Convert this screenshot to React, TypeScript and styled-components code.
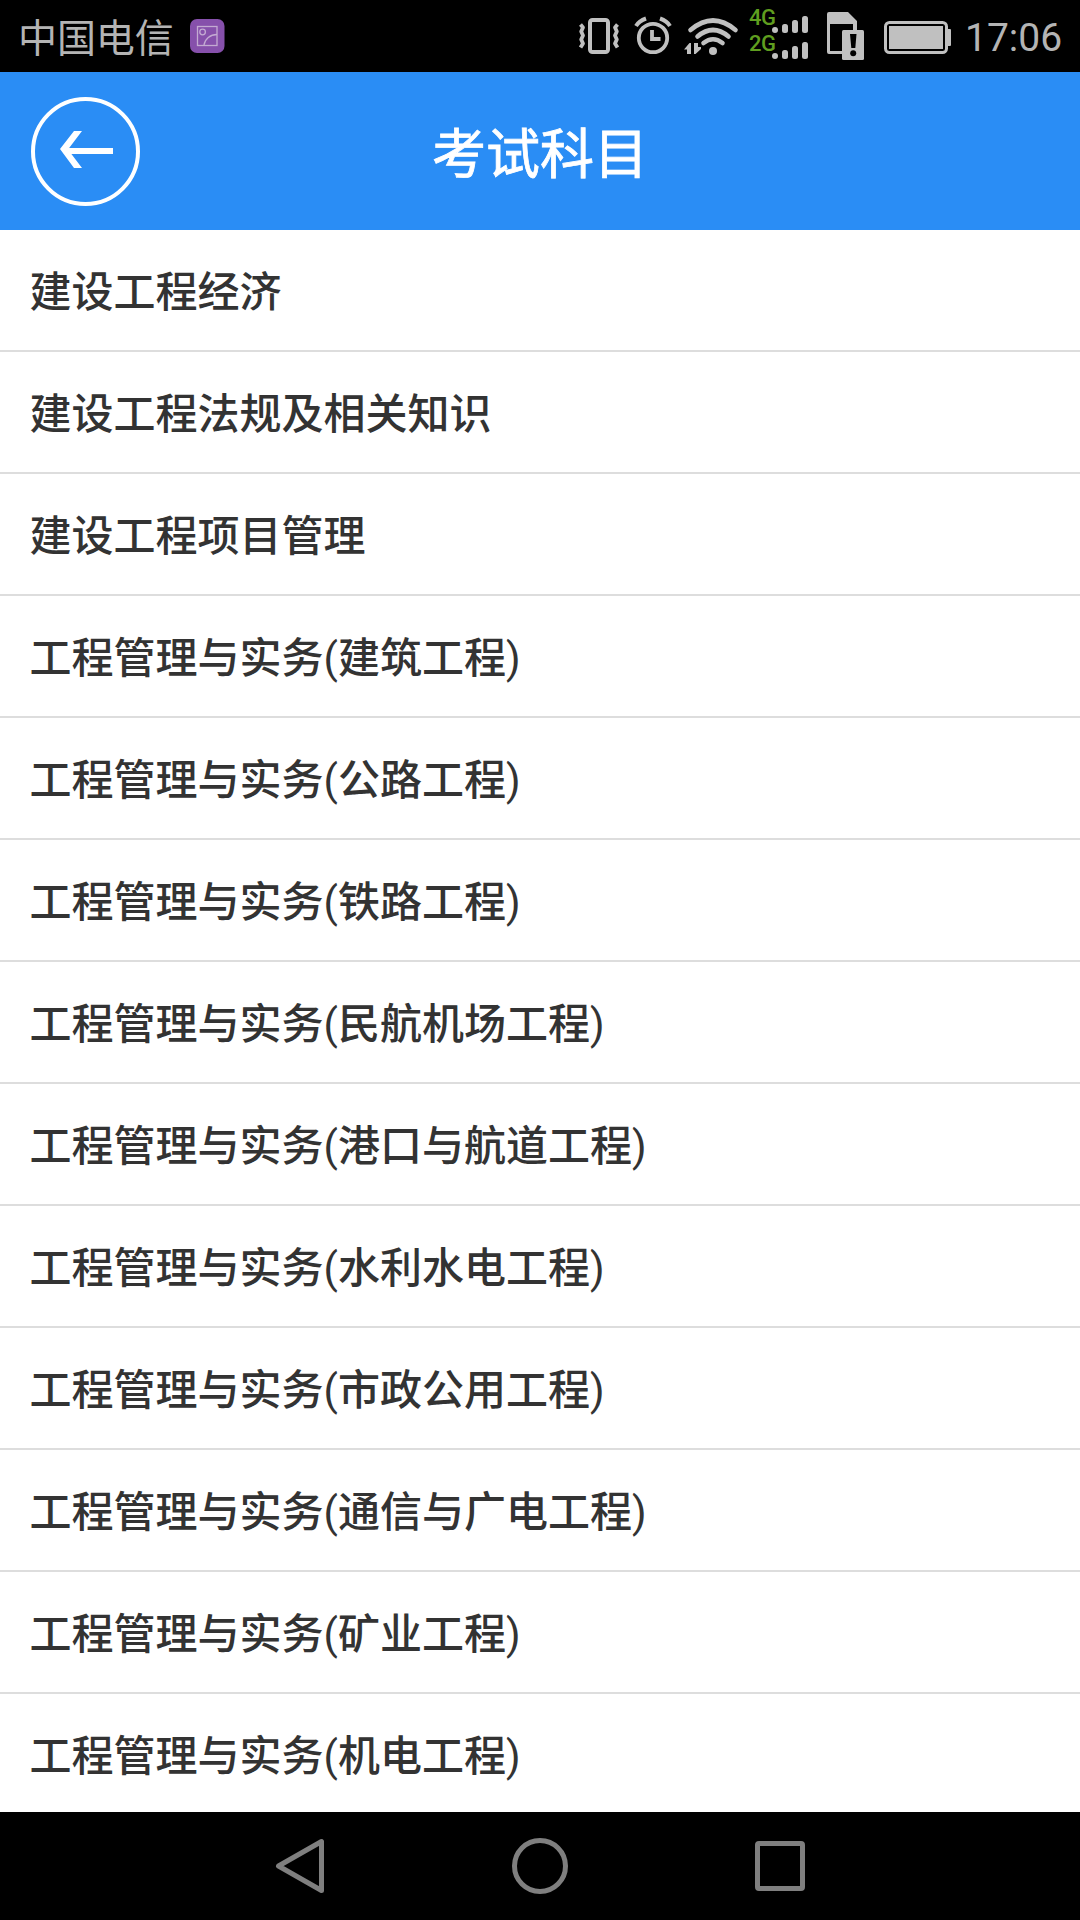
import React from "react";
import styled, { createGlobalStyle } from "styled-components";

const GlobalStyle = createGlobalStyle`
  * { box-sizing: border-box; }
  body { margin: 0; background: #fff; }
`;

const Screen = styled.div`
  display: flex;
  flex-direction: column;
  width: 1080px;
  height: 1920px;
  overflow: hidden;
  background: #fff;
  font-family: Roboto, "Noto Sans CJK SC", sans-serif;
`;

const StatusBar = styled.div`
  display: flex;
  flex: none;
  align-items: flex-start;
  height: 72px;
  padding: 0 17px 0 18px;
  background: #000;
  color: #b4b4b4;
`;

const Carrier = styled.span`
  flex: none;
  width: 157px;
  margin-top: 3px;
  font-size: 39px;
  font-weight: 400;
  line-height: 72px;
  letter-spacing: -0.1px;
  white-space: nowrap;
`;

const Clock = styled.span`
  margin-top: 2px;
  font-size: 39px;
  line-height: 72px;
  white-space: nowrap;
`;

const Glyph = styled.svg<{ $left?: number }>`
  display: block;
  flex: none;
  height: 72px;
  margin-left: ${(p) => p.$left ?? 0}px;
`;

const Networks = styled.div`
  display: flex;
  flex: none;
  flex-direction: column;
  width: 60px;
  margin-left: 10px;
  padding-top: 7px;
`;

const NetworkRow = styled.div`
  display: flex;
  align-items: flex-start;
  height: 26px;
`;

const NetworkType = styled.span`
  width: 23px;
  color: #5f9e1f;
  font-size: 22px;
  font-weight: 500;
  line-height: 22px;
  letter-spacing: -0.6px;
  white-space: nowrap;
`;

const Bars = styled.svg`
  display: block;
  flex: none;
  margin-top: 9px;
`;

const Header = styled.header`
  display: grid;
  grid-template-columns: 140px 1fr 140px;
  flex: none;
  align-items: center;
  height: 158px;
  background: #2a8df5;
`;

const BackButton = styled.button`
  width: 110px;
  height: 110px;
  margin: 0 0 0 30px;
  padding: 0;
  border: 0;
  background: none;
`;

const Title = styled.h1`
  margin: 9px 0 0;
  color: #fff;
  font-size: 54px;
  font-weight: 400;
  line-height: 80px;
  text-align: center;
  -webkit-text-stroke: 0.8px #fff;
`;

const List = styled.ul`
  flex: 1;
  min-height: 0;
  margin: 0;
  padding: 0;
  overflow: hidden;
  list-style: none;
`;

const Row = styled.li`
  display: flex;
  align-items: center;
  height: 122px;
  padding: 0 29.5px 4px;
  border-bottom: 2px solid #ddd;
  color: #333;
  font-size: 42px;
  font-weight: 500;
  white-space: nowrap;
`;

const Paren = styled.span`
  font-weight: 400;
`;

const NavBar = styled.nav`
  display: flex;
  flex: none;
  align-items: center;
  justify-content: center;
  gap: 180px;
  height: 108px;
  background: #000;
`;

const NavIcon = styled.svg`
  display: block;
  width: 60px;
  height: 60px;
  fill: none;
  stroke: #7f7f7f;
  stroke-width: 5;
  stroke-linejoin: round;
`;

const subjects = [
  "建设工程经济",
  "建设工程法规及相关知识",
  "建设工程项目管理",
  "工程管理与实务(建筑工程)",
  "工程管理与实务(公路工程)",
  "工程管理与实务(铁路工程)",
  "工程管理与实务(民航机场工程)",
  "工程管理与实务(港口与航道工程)",
  "工程管理与实务(水利水电工程)",
  "工程管理与实务(市政公用工程)",
  "工程管理与实务(通信与广电工程)",
  "工程管理与实务(矿业工程)",
  "工程管理与实务(机电工程)",
];

const C = "#c0c0c0";

function SignalRow({ type }: { type: string }) {
  return (
    <NetworkRow>
      <NetworkType>{type}</NetworkType>
      <Bars width="37" height="18" viewBox="0 0 37 18" fill={C}>
        <rect x="0" y="11" width="6" height="6" rx="3" />
        <rect x="10" y="8" width="6" height="9" rx="2.5" />
        <rect x="20" y="4" width="6" height="13" rx="2.5" />
        <rect x="30" y="0" width="6" height="17" rx="2.5" />
      </Bars>
    </NetworkRow>
  );
}

function SubjectLabel({ text }: { text: string }) {
  return (
    <span>
      {text.split(/([()])/).map((part, i) =>
        part === "(" || part === ")" ? <Paren key={i}>{part}</Paren> : part
      )}
    </span>
  );
}

export default function App() {
  return (
    <Screen>
      <GlobalStyle />
      <StatusBar>
        <Carrier>中国电信</Carrier>
        <Glyph $left={15} width="35" viewBox="190 0 35 72" fill="none">
          <rect x="190" y="19" width="34.5" height="34" rx="7" fill="#8650ab" />
          <g stroke="#c3aad2" strokeWidth="1.3">
            <rect x="197.5" y="26.5" width="19.5" height="19" />
            <circle cx="202.6" cy="32" r="2.8" />
            <path d="M204 45c1-6 6-10.500 13-10.500" />
          </g>
        </Glyph>
        <Glyph $left={353} width="42" viewBox="578 0 42 72" fill="none" stroke={C}>
          <rect x="590" y="20" width="18" height="32" rx="2.500" strokeWidth="4" />
          <path
            d="M580.500 24.500L583 27.500L581.200 31.500L583 35.500L581.200 39.500L583 43.500L580.500 47.500M617.500 24.500L615 27.500L616.800 31.500L615 35.500L616.800 39.500L615 43.500L617.500 47.500"
            strokeWidth="3.800"
            strokeLinejoin="round"
          />
        </Glyph>
        <Glyph $left={14} width="38" viewBox="634 0 38 72" fill="none" stroke={C}>
          <circle cx="653" cy="38" r="14.200" strokeWidth="3.800" />
          <path d="M652 30v9h8.500" strokeWidth="3.800" />
          <path d="M636 26q3-5 10-7.500M670 26q-3-5-10-7.500" strokeWidth="4" />
        </Glyph>
        <Glyph $left={12} width="55" viewBox="684 0 55 72" fill="none" stroke={C}>
          <path d="M690.500 30q22.500-19 45 0M697.500 36.500q15.500-13 31 0M703.500 43q9.500-7.500 19 0" strokeWidth="4.600" strokeLinecap="round" />
          <circle cx="713" cy="51" r="4" fill={C} stroke="none" />
          <path d="M684 49.500L689.500 43h1.500v11h-4v-4.500zM694 43h4v4h3v2l-5.500 5h-1.500z" fill={C} stroke="none" />
        </Glyph>
        <Networks>
          <SignalRow type="4G" />
          <SignalRow type="2G" />
        </Networks>
        <Glyph $left={18} width="38" viewBox="827 0 38 72">
          <path d="M829 12h19l9 9v10h-4v-7h-23v27h12v3h-13a2 2 0 0 1-2-2v-38a2 2 0 0 1 2-2z" fill={C} />
          <rect x="842" y="30" width="22" height="30" rx="1.500" fill={C} />
          <path d="M850 34h6.500l-1.200 14h-4z" fill="#000" />
          <circle cx="853.200" cy="53.300" r="3" fill="#000" />
        </Glyph>
        <Glyph $left={19} width="68" viewBox="884 0 68 72">
          <rect x="885.500" y="22.500" width="61" height="30" rx="4" fill="none" stroke={C} strokeWidth="3" />
          <rect x="889" y="26" width="54" height="23" fill={C} />
          <path d="M948 29h2a1 1 0 0 1 1 1v15a1 1 0 0 1-1 1h-2z" fill={C} />
        </Glyph>
        <Glyph width="13" viewBox="0 0 13 72" />
        <Clock>17:06</Clock>
      </StatusBar>
      <Header>
        <BackButton aria-label="返回">
          <svg width="110" height="110" viewBox="30 96 110 110" fill="none" stroke="#fff">
            <circle cx="85.500" cy="151.500" r="52.500" strokeWidth="4" />
            <path d="M66 151h47" strokeWidth="6" />
            <path d="M60 149L74 131h8L68 149.500L82 168h-8z" fill="#fff" stroke="none" />
          </svg>
        </BackButton>
        <Title>考试科目</Title>
      </Header>
      <List>
        {subjects.map((s) => (
          <Row key={s}>
            <SubjectLabel text={s} />
          </Row>
        ))}
      </List>
      <NavBar>
        <NavIcon viewBox="0 0 60 60">
          <path d="M51.500 5.500v49L8.500 30z" />
        </NavIcon>
        <NavIcon viewBox="0 0 60 60">
          <circle cx="30" cy="30" r="25.500" />
        </NavIcon>
        <NavIcon viewBox="0 0 60 60">
          <rect x="7.500" y="7.500" width="45" height="45" rx="1.500" />
        </NavIcon>
      </NavBar>
    </Screen>
  );
}
